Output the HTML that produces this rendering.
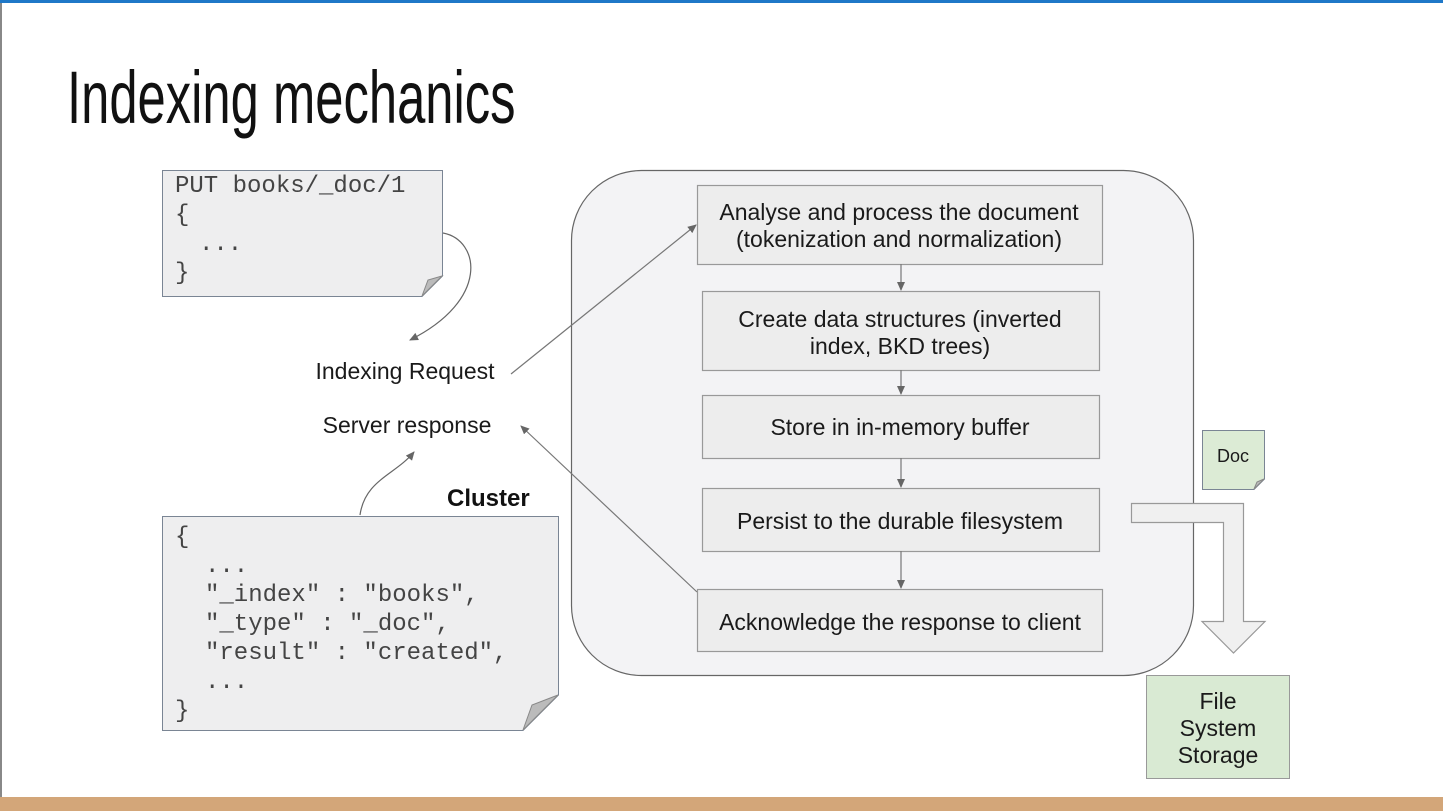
<!DOCTYPE html>
<html><head><meta charset="utf-8"><style>
html,body{margin:0;padding:0;background:#fff;}
svg{display:block}
text{font-family:"Liberation Sans",sans-serif;fill:#1a1a1a}
.m{font-family:"Liberation Mono",monospace;fill:#444;font-size:24px}
</style></head><body>
<svg width="1443" height="811" viewBox="0 0 1443 811" xmlns="http://www.w3.org/2000/svg">
<defs>
<marker id="a" markerWidth="10" markerHeight="10" refX="8" refY="5" orient="auto" markerUnits="userSpaceOnUse"><path d="M0,1 L9,5 L0,9 z" fill="#666"/></marker>
</defs>
<rect width="1443" height="811" fill="#fff"/>
<rect x="0" y="0" width="1443" height="3" fill="#1f78c8"/>
<rect x="0" y="3" width="2" height="795" fill="#888"/>
<rect x="0" y="797" width="1443" height="14" fill="#d3a679"/>
<text x="67" y="123" font-size="74" transform="translate(67 0) scale(0.686 1) translate(-67 0)" style="fill:#111">Indexing mechanics</text>

<!-- code box 1 -->
<path d="M162.5,170.5 H442.5 V276 L422,296.5 H162.5 Z" fill="#eeeeef" stroke="#7a8594"/>
<path d="M442,276 L428,280 L422,296 Z" fill="#bbb" stroke="#888"/>
<text class="m" x="175" y="192">PUT books/_doc/1</text>
<text class="m" x="175" y="221">{</text>
<text class="m" x="199" y="250">...</text>
<text class="m" x="175" y="279">}</text>
<path d="M443,233 C480,240 490,300 410,340" fill="none" stroke="#666" stroke-width="1.2" marker-end="url(#a)"/>

<text x="405" y="379" font-size="23" text-anchor="middle">Indexing Request</text>
<text x="407" y="433" font-size="23" text-anchor="middle">Server response</text>
<path d="M360,515 C365,480 395,475 414,452" fill="none" stroke="#666" stroke-width="1.2" marker-end="url(#a)"/>
<text x="447" y="506" font-size="24" font-weight="bold" style="fill:#111">Cluster</text>

<!-- code box 2 -->
<path d="M162.5,516.5 H558.5 V695 L523,730.5 H162.5 Z" fill="#eeeeef" stroke="#7a8594"/>
<path d="M558,695 L532,705 L523,730 Z" fill="#bbb" stroke="#888"/>
<text class="m" x="175" y="543">{</text>
<text class="m" x="205" y="572">...</text>
<text class="m" x="205" y="601">"_index" : "books",</text>
<text class="m" x="205" y="630">"_type" : "_doc",</text>
<text class="m" x="205" y="659">"result" : "created",</text>
<text class="m" x="205" y="688">...</text>
<text class="m" x="175" y="717">}</text>

<!-- big box -->
<rect x="571.5" y="170.5" width="622" height="505" rx="70" fill="#f3f3f5" stroke="#666" stroke-width="1.2"/>
<line x1="511" y1="374" x2="696" y2="225" stroke="#777" stroke-width="1.2" marker-end="url(#a)"/>
<line x1="697" y1="592" x2="521" y2="426" stroke="#777" stroke-width="1.2" marker-end="url(#a)"/>
<g fill="#ededed" stroke="#999" stroke-width="1.2">
<rect x="697.5" y="185.5" width="405" height="79"/>
<rect x="702.5" y="291.5" width="397" height="79"/>
<rect x="702.5" y="395.5" width="397" height="63"/>
<rect x="702.5" y="488.5" width="397" height="63"/>
<rect x="697.5" y="589.5" width="405" height="62"/>
</g>
<g stroke="#777" stroke-width="1.2">
<line x1="901" y1="264" x2="901" y2="290" marker-end="url(#a)"/>
<line x1="901" y1="370" x2="901" y2="394" marker-end="url(#a)"/>
<line x1="901" y1="458" x2="901" y2="487" marker-end="url(#a)"/>
<line x1="901" y1="551" x2="901" y2="588" marker-end="url(#a)"/>
</g>
<g font-size="23" text-anchor="middle">
<text x="899" y="220">Analyse and process the document</text>
<text x="899" y="247">(tokenization and normalization)</text>
<text x="900" y="327">Create data structures (inverted</text>
<text x="900" y="354">index, BKD trees)</text>
<text x="900" y="435">Store in in-memory buffer</text>
<text x="900" y="529">Persist to the durable filesystem</text>
<text x="900" y="630">Acknowledge the response to client</text>
</g>

<!-- doc note -->
<path d="M1202.5,430.5 H1264.5 V479 L1254,489.5 H1202.5 Z" fill="#dcebd5" stroke="#7a8594"/>
<path d="M1264,479 L1257,482 L1254,489 Z" fill="#bbb" stroke="#888"/>
<text x="1233" y="462" font-size="18" text-anchor="middle">Doc</text>

<!-- L arrow -->
<path d="M1131.5,503.5 H1243.5 V621.5 H1265 L1233.5,653 L1202,621.5 H1223.5 V522.5 H1131.5 Z" fill="#f0f0f0" stroke="#999" stroke-width="1.2"/>

<rect x="1146.5" y="675.5" width="143" height="103" fill="#d9ead3" stroke="#999"/>
<g font-size="23" text-anchor="middle">
<text x="1218" y="709">File</text>
<text x="1218" y="736">System</text>
<text x="1218" y="763">Storage</text>
</g>
</svg>
</body></html>
